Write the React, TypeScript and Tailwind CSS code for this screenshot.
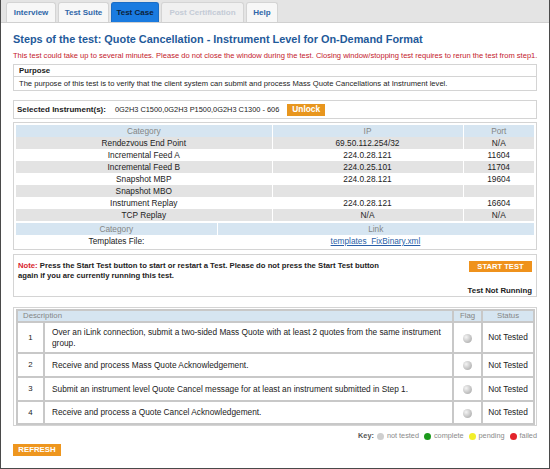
import React from 'react';

const endpoints = [
  { name: 'Rendezvous End Point', ip: '69.50.112.254/32', port: 'N/A' },
  { name: 'Incremental Feed A', ip: '224.0.28.121', port: '11604' },
  { name: 'Incremental Feed B', ip: '224.0.25.101', port: '11704' },
  { name: 'Snapshot MBP', ip: '224.0.28.121', port: '19604' },
  { name: 'Snapshot MBO', ip: '', port: '' },
  { name: 'Instrument Replay', ip: '224.0.28.121', port: '16604' },
  { name: 'TCP Replay', ip: 'N/A', port: 'N/A' }
];

const steps = [
  {
    id: 1,
    text: 'Over an iLink connection, submit a two-sided Mass Quote with at least 2 quotes from the same instrument group.',
    h: 'h-[31px]'
  },
  { id: 2, text: 'Receive and process Mass Quote Acknowledgement.', h: 'h-[24px]' },
  { id: 3, text: 'Submit an instrument level Quote Cancel message for at least an instrument submitted in Step 1.', h: 'h-[24px]' },
  { id: 4, text: 'Receive and process a Quote Cancel Acknowledgement.', h: 'h-[23px]' }
];

const tabs = [
  { label: 'Interview', w: 'w-[50px]' },
  { label: 'Test Suite', w: 'w-[51px]' },
  { label: 'Test Case', w: 'w-[48px]', active: true },
  { label: 'Post Certification', w: 'w-[83px]', disabled: true },
  { label: 'Help', w: 'w-[32px]' }
];

function Dot({ color }: { color: string }) {
  return <span className={`inline-block w-[7px] h-[7px] rounded-full ${color}`} />;
}

export default function App() {
  return (
    <div className="w-[550px] h-[469px] bg-white border-x border-b border-[#4a4a4a] overflow-hidden font-['Liberation_Sans',Arial,sans-serif] text-[#222]">
      {/* tabs */}
      <div className="h-[23px] bg-[#e4e4e4] border-b border-[#d0d0d0] flex items-end gap-[2px] pl-[5px]">
        {tabs.map((t) => (
          <div
            key={t.label}
            className={`${t.w} h-[20px] flex items-center justify-center rounded-t-[3px] text-[8px] font-bold border border-b-0 ${
              t.active
                ? 'bg-[#1a7be0] border-[#1a6cc4] text-[#0c1f3a]'
                : t.disabled
                ? 'bg-[#f0f0f0] border-[#d4d4d4] text-[#c4cbd6]'
                : 'bg-[#f7f7f7] border-[#d4d4d4] text-[#2f66a8]'
            }`}
          >
            {t.label}
          </div>
        ))}
      </div>

      <div className="px-[12px]">
        <h1 className="mt-[9px] text-[10.9px] leading-[14px] font-bold text-[#1f5a9a]">
          Steps of the test: Quote Cancellation - Instrument Level for On-Demand Format
        </h1>
        <p className="mt-[5px] text-[7.55px] leading-[10px] whitespace-nowrap text-[#c4202b]">
          This test could take up to several minutes. Please do not close the window during the test. Closing window/stopping test requires to rerun the test from step1.
        </p>

        {/* purpose */}
        <div className="mt-[3px] border border-[#d4d4d4]">
          <div className="h-[12px] px-[5px] flex items-center text-[7.8px] font-bold border-b border-[#d4d4d4]">Purpose</div>
          <div className="h-[13px] px-[5px] flex items-center text-[7.6px]">
            The purpose of this test is to verify that the client system can submit and process Mass Quote Cancellations at Instrument level.
          </div>
        </div>

        {/* selected instruments */}
        <div className="mt-[9px] h-[19px] border border-[#d4d4d4] flex items-center px-[3px]">
          <span className="text-[8px] font-bold">Selected Instrument(s):</span>
          <span className="ml-[9px] text-[7.4px]">0G2H3 C1500,0G2H3 P1500,0G2H3 C1300 - 606</span>
          <span className="ml-[8px] h-[12px] px-[5px] bg-[#e8961e] text-white text-[8.4px] font-bold flex items-center">Unlock</span>
        </div>

        {/* endpoints */}
        <div className="mt-[3px] border border-[#d4d4d4] p-[2px] text-[8.3px]">
          <table className="w-full border-collapse">
            <thead>
              <tr className="bg-[#d6e5f1] text-[#858585] h-[12px]">
                <th className="font-normal leading-[12px] w-[256px] border-r border-white">Category</th>
                <th className="font-normal leading-[12px] w-[191px] border-r border-white">IP</th>
                <th className="font-normal leading-[12px]">Port</th>
              </tr>
            </thead>
            <tbody>
              {endpoints.map((e, i) => (
                <tr key={e.name} className={`h-[12px] ${i % 2 === 0 ? 'bg-[#e3e3e3]' : 'bg-white'}`}>
                  <td className="text-center leading-[12px] border-r border-white">{e.name}</td>
                  <td className="text-center leading-[12px] border-r border-white">{e.ip}</td>
                  <td className="text-center leading-[12px]">{e.port}</td>
                </tr>
              ))}
            </tbody>
          </table>
          <table className="w-full border-collapse mt-[2px]">
            <thead>
              <tr className="bg-[#d6e5f1] text-[#858585] h-[12px]">
                <th className="font-normal leading-[12px] w-[201px] border-r border-white">Category</th>
                <th className="font-normal leading-[12px]">Link</th>
              </tr>
            </thead>
            <tbody>
              <tr className="h-[12px]">
                <td className="text-center leading-[12px]">Templates File:</td>
                <td className="text-center leading-[12px]">
                  <span className="text-[#2a5fa8] underline">templates_FixBinary.xml</span>
                </td>
              </tr>
            </tbody>
          </table>
        </div>

        {/* note */}
        <div className="mt-[4px] h-[43px] border border-[#d4d4d4] px-[4px] pt-[6px] flex justify-between">
          <div className="text-[7.7px] leading-[10px] font-bold w-[380px]">
            <p>
              <span className="text-[#d8262e]">Note:</span> Press the Start Test button to start or restart a Test. Please do not press the Start Test button
            </p>
            <p>again if you are currently running this test.</p>
          </div>
          <div className="flex flex-col items-end">
            <span className="w-[63px] h-[11px] bg-[#ef921c] text-white text-[7.6px] font-bold flex items-center justify-center">START TEST</span>
            <span className="mt-[13px] text-[7.8px] font-bold">Test Not Running</span>
          </div>
        </div>

        {/* steps */}
        <div className="mt-[10px] border border-[#d4d4d4] pl-[2px] pr-[1px] pt-[1px]">
          <table className="w-full border-collapse text-[8.3px]">
            <thead>
              <tr className="bg-[#d6e5f1] text-[#858585] h-[12px] text-[7.8px]">
                <th colSpan={2} className="font-normal leading-[10px] text-left pl-[5px] border-2 border-[#c8c8c8]">Description</th>
                <th className="font-normal leading-[10px] w-[29px] border-2 border-[#c8c8c8]">Flag</th>
                <th className="font-normal leading-[10px] w-[52px] border-2 border-[#c8c8c8]">Status</th>
              </tr>
            </thead>
            <tbody>
              {steps.map((s) => (
                <tr key={s.id} className={s.h}>
                  <td className="w-[27px] text-center text-[7.8px] border-2 border-[#c8c8c8]">{s.id}</td>
                  <td className="px-[7px] leading-[11px] border-2 border-[#c8c8c8]">{s.text}</td>
                  <td className="text-center border-2 border-[#c8c8c8]">
                    <span className="inline-block align-middle w-[9px] h-[9px] rounded-full bg-[radial-gradient(circle_at_35%_35%,#f4f4f4,#a0a0a0)]" />
                  </td>
                  <td className="text-center border-2 border-[#c8c8c8]">Not Tested</td>
                </tr>
              ))}
            </tbody>
          </table>
        </div>

        {/* key */}
        <div className="mt-[5px] flex items-center justify-end gap-[3px] text-[7.3px] text-[#8a8a8a]">
          <span className="font-bold text-[#555]">Key:</span>
          <Dot color="bg-[#cfcfcf]" />
          <span>not tested</span>
          <Dot color="bg-[#1c9a1c] ml-[2px]" />
          <span>complete</span>
          <Dot color="bg-[#f2ef2a] ml-[2px]" />
          <span>pending</span>
          <Dot color="bg-[#e3242b] ml-[2px]" />
          <span>failed</span>
        </div>

        <div className="mt-[2px] w-[48px] h-[12px] bg-[#ee961e] text-white text-[7.8px] font-bold flex items-center justify-center">
          REFRESH
        </div>
      </div>
    </div>
  );
}
